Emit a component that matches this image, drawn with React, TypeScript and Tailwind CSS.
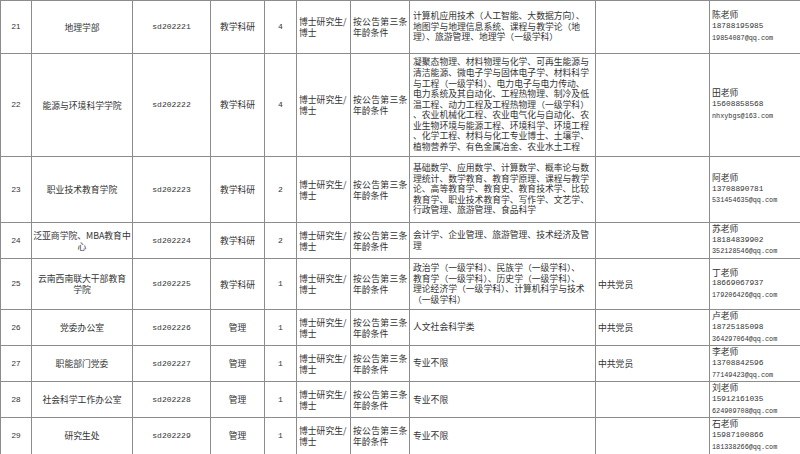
import React from 'react';

type Row = {
  no: string;
  dept: string[];
  code: string;
  kind: string;
  count: string;
  major: string[];
  party: string;
  name: string;
  tel: string;
  mail: string;
  h: string;
};

const rows: Row[] = [
  {
    no: '21', dept: ['地理学部'], code: 'sd202221', kind: '教学科研', count: '4',
    major: ['计算机应用技术（人工智能、大数据方向）、', '地图学与地理信息系统、课程与教学论（地', '理）、旅游管理、地理学（一级学科）'],
    party: '', name: '陈老师', tel: '18788195985', mail: '19854087@qq.com', h: 'h-[53px]',
  },
  {
    no: '22', dept: ['能源与环境科学学院'], code: 'sd202222', kind: '教学科研', count: '4',
    major: [
      '凝聚态物理、材料物理与化学、可再生能源与',
      '清洁能源、微电子学与固体电子学、材料科学',
      '与工程（一级学科）、电力电子与电力传动、',
      '电力系统及其自动化、工程热物理、制冷及低',
      '温工程、动力工程及工程热物理（一级学科）',
      '、农业机械化工程、农业电气化与自动化、农',
      '业生物环境与能源工程、环境科学、环境工程',
      '、化学工程、材料与化工专业博士、土壤学、',
      '植物营养学、有色金属冶金、农业水土工程',
    ],
    party: '', name: '田老师', tel: '15608858568', mail: 'nhxybgs@163.com', h: 'h-[103px]',
  },
  {
    no: '23', dept: ['职业技术教育学院'], code: 'sd202223', kind: '教学科研', count: '2',
    major: [
      '基础数学、应用数学、计算数学、概率论与数',
      '理统计、数学教育、教育学原理、课程与教学',
      '论、高等教育学、教育史、教育技术学、比较',
      '教育学、职业技术教育学、写作学、文艺学、',
      '行政管理、旅游管理、食品科学',
    ],
    party: '', name: '阿老师', tel: '13708890781', mail: '531454635@qq.com', h: 'h-[66px]',
  },
  {
    no: '24', dept: ['泛亚商学院、MBA教育中', '心'], code: 'sd202224', kind: '教学科研', count: '2',
    major: ['会计学、企业管理、旅游管理、技术经济及管', '理'],
    party: '', name: '苏老师', tel: '18184839902', mail: '352128546@qq.com', h: 'h-[36px]',
  },
  {
    no: '25', dept: ['云南西南联大干部教育', '学院'], code: 'sd202225', kind: '教学科研', count: '1',
    major: [
      '政治学（一级学科）、民族学（一级学科）、',
      '教育学（一级学科）、历史学（一级学科）、',
      '理论经济学（一级学科）、计算机科学与技术',
      '（一级学科）',
    ],
    party: '中共党员', name: '丁老师', tel: '18669067937', mail: '179206426@qq.com', h: 'h-[51px]',
  },
  {
    no: '26', dept: ['党委办公室'], code: 'sd202226', kind: '管理', count: '1',
    major: ['人文社会科学类'],
    party: '中共党员', name: '卢老师', tel: '18725185098', mail: '364297064@qq.com', h: 'h-[33px]',
  },
  {
    no: '27', dept: ['职能部门党委'], code: 'sd202227', kind: '管理', count: '1',
    major: ['专业不限'],
    party: '中共党员', name: '李老师', tel: '13708842596', mail: '77149423@qq.com', h: 'h-[34px]',
  },
  {
    no: '28', dept: ['社会科学工作办公室'], code: 'sd202228', kind: '管理', count: '1',
    major: ['专业不限'],
    party: '', name: '刘老师', tel: '15912161035', mail: '624909708@qq.com', h: 'h-[35px]',
  },
  {
    no: '29', dept: ['研究生处'], code: 'sd202229', kind: '管理', count: '1',
    major: ['专业不限'],
    party: '', name: '石老师', tel: '15987100866', mail: '181338266@qq.com', h: 'h-[35px]',
  },
];

const td = 'border border-[#8c8c8c] align-middle p-0';
const mono = "font-['Liberation_Mono',monospace]";

export default function App() {
  return (
    <div className="h-[454px] w-[800px] overflow-hidden bg-white">
      <table className="table-fixed border-collapse w-[800px] text-[#333] text-[8.8px] font-['Noto_Sans_CJK_SC',sans-serif]">
        <colgroup>
          <col className="w-[31px]" />
          <col className="w-[101px]" />
          <col className="w-[78px]" />
          <col className="w-[54px]" />
          <col className="w-[32px]" />
          <col className="w-[54px]" />
          <col className="w-[59px]" />
          <col className="w-[186px]" />
          <col className="w-[114px]" />
          <col className="w-[91px]" />
        </colgroup>
        <tbody>
          {rows.map(r => (
            <tr key={r.no} className={r.h}>
              <td className={`${td} text-center text-[8px] font-['Liberation_Sans',sans-serif]`}>{r.no}</td>
              <td className={`${td} text-center leading-[11px]`}>
                {r.dept.map((d, i) => <div key={i} className="whitespace-nowrap">{d}</div>)}
              </td>
              <td className={`${td} text-center text-[8px] ${mono}`}>{r.code}</td>
              <td className={`${td} text-center`}>{r.kind}</td>
              <td className={`${td} text-center text-[8px] ${mono}`}>{r.count}</td>
              <td className={`${td} px-[2px] leading-[11px]`}>
                <div className="whitespace-nowrap">博士研究生/</div>
                <div>博士</div>
              </td>
              <td className={`${td} pl-[2px] leading-[11px] overflow-hidden`}>
                <div className="whitespace-nowrap tracking-[0.3px]">按公告第三条</div>
                <div className="whitespace-nowrap">年龄条件</div>
              </td>
              <td className={`${td} px-[3px] leading-[10.6px]`}>
                {r.major.map((m, i) => <div key={i} className="whitespace-nowrap">{m}</div>)}
              </td>
              <td className={`${td} px-[2px]`}>{r.party}</td>
              <td className={`${td} px-[2px] leading-[11.7px]`}>
                <div>{r.name}</div>
                <div className={`text-[7.8px] ${mono}`}>{r.tel}</div>
                <div className={`text-[6.8px] ${mono}`}>{r.mail}</div>
              </td>
            </tr>
          ))}
          <tr className="h-[36px]">
            <td className={td}></td>
            <td className={td}></td>
            <td className={td}></td>
            <td className={td}></td>
            <td className={td}></td>
            <td className={td}></td>
            <td className={td}></td>
            <td className={td}></td>
            <td className={td}></td>
            <td className={`${td} align-top px-[2px] pt-[2px] leading-[11.7px]`}>
              <div>王老师</div>
            </td>
          </tr>
        </tbody>
      </table>
    </div>
  );
}
